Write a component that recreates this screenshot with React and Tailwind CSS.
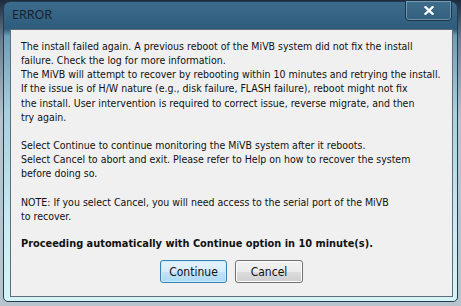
const FONT = { fontFamily: '"DejaVu Sans Condensed", "DejaVu Sans", sans-serif' };

const lines = [
  "The install failed again. A previous reboot of the MiVB system did not fix the install",
  "failure. Check the log for more information.",
  "The MiVB will attempt to recover by rebooting within 10 minutes and retrying the install.",
  "If the issue is of H/W nature (e.g., disk failure, FLASH failure), reboot might not fix",
  "the install. User intervention is required to correct issue, reverse migrate, and then",
  "try again.",
  "",
  "Select Continue to continue monitoring the MiVB system after it reboots.",
  "Select Cancel to abort and exit. Please refer to Help on how to recover the system",
  "before doing so.",
  "",
  "NOTE: If you select Cancel, you will need access to the serial port of the MiVB",
  "to recover.",
  "",
];

export default function App() {
  return (
    <div className="w-[461px] h-[306px] overflow-hidden bg-[linear-gradient(to_bottom,#1c2b40_0px,#6c7f90_40px,#b7c4cd_120px)] pt-[1px] pl-[3px]">
      <div className="relative w-[455px] h-[301px] rounded-t-[7px] rounded-b-[5px] border border-[#243a4d] bg-[linear-gradient(to_bottom,#3c6b8b_0px,#2e5c7c_27px,#6f9db6_34px,#a9cfdc_110px,#c9eaf0_220px,#d6f4f6_300px)] flex flex-col">
        <div className="h-[27px] flex items-center pl-[8px]">
          <span className="text-[12.5px] text-[#15222c]" style={{ fontFamily: '"Noto Sans", sans-serif' }}>ERROR</span>
        </div>
        <button className="absolute top-[-2px] right-[5px] w-[47px] h-[21px] rounded-b-[4px] border border-[#1d3447] shadow-[inset_0_0_0_1px_rgba(200,225,240,0.4)] bg-[linear-gradient(to_bottom,#3f6d8c,#335f7e)] flex items-center justify-center">
          <svg width="10" height="9" viewBox="0 0 10 9">
            <path d="M1.5 1.2 L8.5 7.8 M8.5 1.2 L1.5 7.8" stroke="#fff" strokeWidth="2.3" strokeLinecap="square" />
          </svg>
        </button>
        <div className="ml-[6px] mr-[4px] h-[268px] border border-[#5f6e78] bg-[#f0f0f0] pl-[10px] pt-[9px] text-[10.5px] text-[#111] font-stretch-condensed" style={FONT}>
          {lines.map((l, i) => (
            <div key={i} className="h-[14.15px] leading-[14.15px] whitespace-nowrap">{l}</div>
          ))}
          <div className="h-[14.15px] leading-[14.15px] whitespace-nowrap font-bold text-[10.9px]">
            Proceeding automatically with Continue option in 10 minute(s).
          </div>
          <div className="flex justify-center gap-[8px] mt-[9px] pr-[10px]">
            <button className="w-[67px] h-[23px] rounded-[3px] border border-[#3c7fb1] bg-[linear-gradient(to_bottom,#e5f4fc_0%,#d6ecfb_50%,#c2e2f8_51%,#aedaf6_100%)] shadow-[inset_0_0_0_1px_#c5ecfc] text-[12px] text-[#111]">
              Continue
            </button>
            <button className="w-[68px] h-[23px] rounded-[3px] border border-[#707070] bg-[linear-gradient(to_bottom,#f2f2f2_0%,#ebebeb_50%,#dddddd_51%,#cfcfcf_100%)] shadow-[inset_0_0_0_1px_#fcfcfc] text-[12px] text-[#111]">
              Cancel
            </button>
          </div>
        </div>
      </div>
    </div>
  );
}
